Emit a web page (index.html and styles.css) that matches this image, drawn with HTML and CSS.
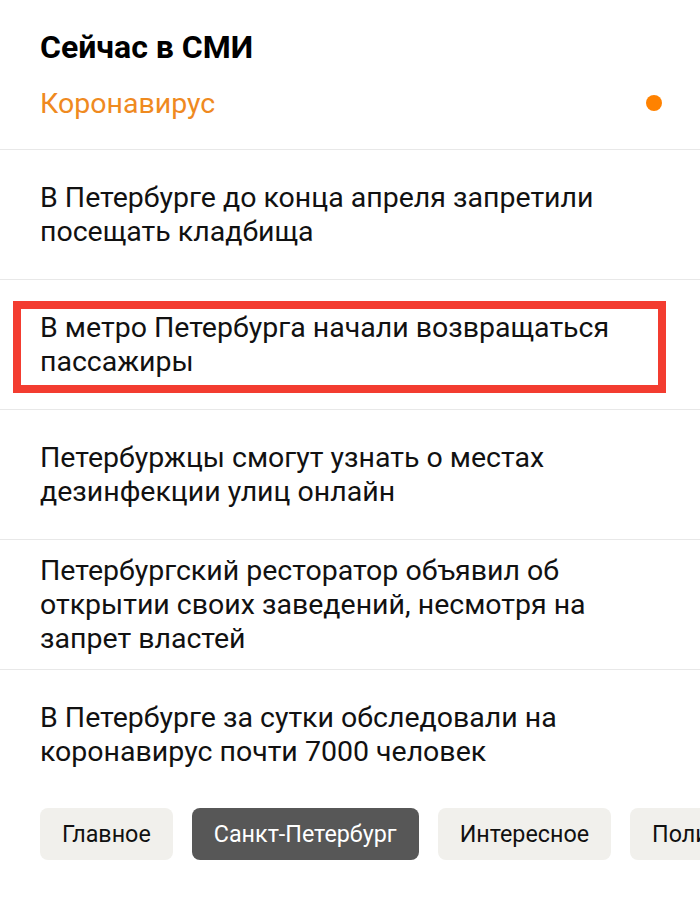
FILE: index.html
```html
<!DOCTYPE html>
<html lang="ru">
<head>
<meta charset="utf-8">
<title>Сейчас в СМИ</title>
<link rel="stylesheet" href="styles.css">
</head>
<body>
<div class="page">
  <header class="head">
    <h1 class="title">Сейчас в СМИ</h1>
    <div class="topic">
      <span class="topic-name">Коронавирус</span>
      <span class="dot"></span>
    </div>
  </header>
  <ul class="news">
    <li class="item"><p class="text">В Петербурге до конца апреля запретили посещать кладбища</p></li>
    <li class="item marked"><p class="text">В метро Петербурга начали возвращаться пассажиры</p></li>
    <li class="item"><p class="text">Петербуржцы смогут узнать о местах дезинфекции улиц онлайн</p></li>
    <li class="item"><p class="text">Петербургский ресторатор объявил об открытии своих заведений, несмотря на запрет властей</p></li>
    <li class="item"><p class="text">В Петербурге за сутки обследовали на коронавирус почти 7000 человек</p></li>
  </ul>
  <nav class="chips">
    <span class="chip">Главное</span>
    <span class="chip active">Санкт-Петербург</span>
    <span class="chip">Интересное</span>
    <span class="chip">Политика</span>
    <span class="chip">Экономика</span>
  </nav>
</div>
</body>
</html>
```
FILE: styles.css
```css
*, *::before, *::after { box-sizing: border-box; }
html, body { margin: 0; padding: 0; background: #fff; }
body {
  font-family: Roboto, "Noto Sans", sans-serif;
  color: #111;
  width: 700px;
  height: 898px;
  overflow: hidden;
}
.page { display: flex; flex-direction: column; }
.head { padding: 29px 38px 27px 40px; }
.title {
  margin: 0;
  font-size: 32px;
  line-height: 36px;
  font-weight: 700;
  color: #000;
}
.topic {
  margin-top: 21px;
  display: flex;
  align-items: center;
  justify-content: space-between;
  height: 36px;
}
.topic-name {
  font-size: 28.5px;
  line-height: 36px;
  color: #ef8a1f;
}
.dot {
  width: 16px;
  height: 16px;
  border-radius: 50%;
  background: #ff8200;
  margin-top: -2px;
}
.news { list-style: none; margin: 0; padding: 0; }
.item {
  position: relative;
  height: 130px;
  border-top: 1px solid #e8e8e8;
  display: flex;
  align-items: center;
  padding: 0 40px;
}
.text {
  margin: 0;
  font-size: 28.5px;
  line-height: 34px;
  color: #111;
}
.marked::after {
  content: "";
  position: absolute;
  left: 13px;
  top: 21px;
  width: 653px;
  height: 92px;
  border: 8px solid #f33c30;
}
.chips {
  margin-top: 9px;
  padding-left: 40px;
  display: flex;
  gap: 19px;
  white-space: nowrap;
  overflow: hidden;
}
.chip {
  flex: none;
  height: 52px;
  display: flex;
  align-items: center;
  padding: 0 22px;
  border-radius: 8px;
  background: #f1f0ec;
  font-size: 23.3px;
  color: #111;
}
.chip.active { background: #575757; color: #fff; }
```
